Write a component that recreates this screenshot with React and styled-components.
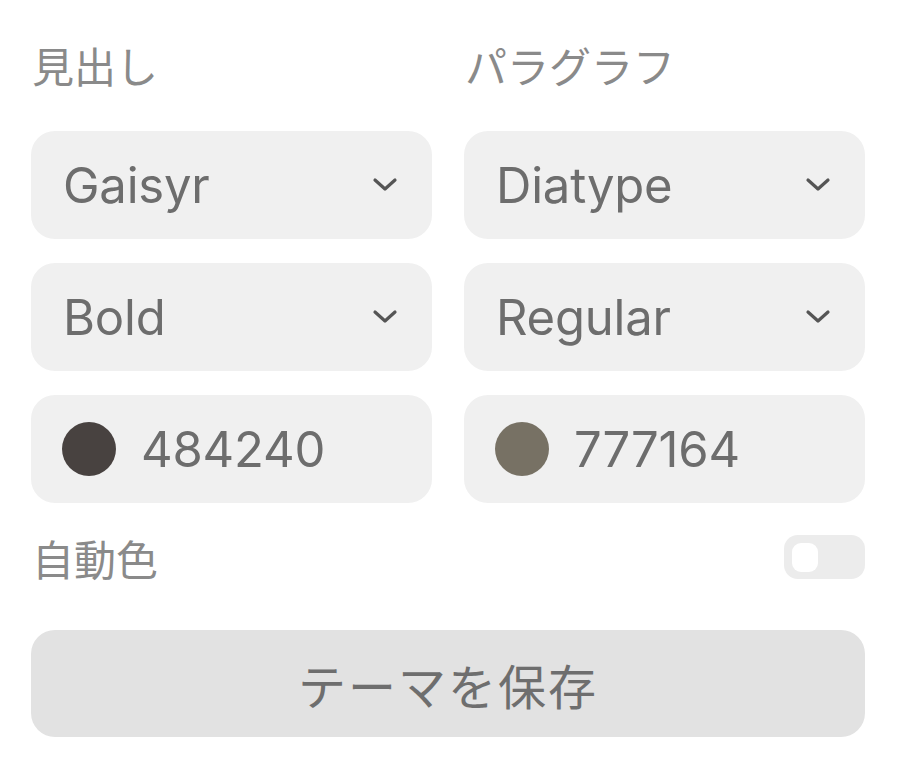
import React from "react";
import styled, { createGlobalStyle } from "styled-components";

const Global = createGlobalStyle`
  html, body { margin: 0; padding: 0; background: #ffffff; }
  body { font-family: Inter, "Noto Sans CJK JP", sans-serif; }
`;

const Panel = styled.div`
  width: 900px;
  height: 765px;
  box-sizing: border-box;
  padding: 40px 35px 0 31px;
  display: flex;
  flex-direction: column;
`;

const Grid = styled.div`
  display: grid;
  grid-template-columns: 1fr 1fr;
  column-gap: 32px;
  row-gap: 24px;
`;

const Label = styled.div`
  font-family: Inter, "Noto Sans CJK JP", sans-serif;
  font-size: 42px;
  line-height: 56px;
  color: #8a8a8a;
  padding-left: 1px;
  margin-bottom: 35px;
`;

const Field = styled.div`
  height: 108px;
  background: #f0f0f0;
  border-radius: 24px;
  display: flex;
  align-items: center;
  box-sizing: border-box;
  padding: 0 34px 0 ${(p) => (p.$swatch ? "31px" : "32px")};
  gap: 25px;
  font-family: Inter, sans-serif;
  font-size: 49px;
  color: #6d6d6d;
`;

const Value = styled.span`
  flex: 1;
  letter-spacing: -0.2px;
`;

const Dot = styled.span`
  width: 54px;
  height: 54px;
  border-radius: 50%;
  background: ${(p) => p.$color};
  flex: none;
`;

const Chevron = () => (
  <svg width="26" height="18" viewBox="0 0 26 18" fill="none">
    <path d="M3 4 L13 13 L23 4" stroke="#555" strokeWidth="3.2" strokeLinecap="round" strokeLinejoin="round" />
  </svg>
);

const ToggleRow = styled.div`
  margin-top: 32px;
  height: 44px;
  display: flex;
  align-items: center;
  justify-content: space-between;
`;

const RowLabel = styled.span`
  font-family: Inter, "Noto Sans CJK JP", sans-serif;
  font-size: 42px;
  color: #8a8a8a;
  padding-left: 1px;
`;

const Switch = styled.div`
  width: 81px;
  height: 44px;
  border-radius: 14px;
  background: #ececec;
  box-sizing: border-box;
  padding: 8px;
  display: flex;
`;

const Knob = styled.span`
  width: 26px;
  height: 29px;
  border-radius: 9px;
  background: #ffffff;
`;

const SaveButton = styled.button`
  margin-top: 51px;
  height: 107px;
  border: none;
  border-radius: 24px;
  background: #e2e2e2;
  color: #6e6e6e;
  font-family: "Noto Sans CJK JP", sans-serif;
  font-size: 48px;
  letter-spacing: 2px;
  cursor: pointer;
`;

export default function App() {
  return (
    <>
      <Global />
      <Panel>
        <Grid>
          <div>
            <Label>見出し</Label>
            <Field>
              <Value>Gaisyr</Value>
              <Chevron />
            </Field>
          </div>
          <div>
            <Label>パラグラフ</Label>
            <Field>
              <Value>Diatype</Value>
              <Chevron />
            </Field>
          </div>
          <Field>
            <Value>Bold</Value>
            <Chevron />
          </Field>
          <Field>
            <Value>Regular</Value>
            <Chevron />
          </Field>
          <Field $swatch>
            <Dot $color="#484240" />
            <Value>484240</Value>
          </Field>
          <Field $swatch>
            <Dot $color="#777164" />
            <Value>777164</Value>
          </Field>
        </Grid>
        <ToggleRow>
          <RowLabel>自動色</RowLabel>
          <Switch>
            <Knob />
          </Switch>
        </ToggleRow>
        <SaveButton>テーマを保存</SaveButton>
      </Panel>
    </>
  );
}
